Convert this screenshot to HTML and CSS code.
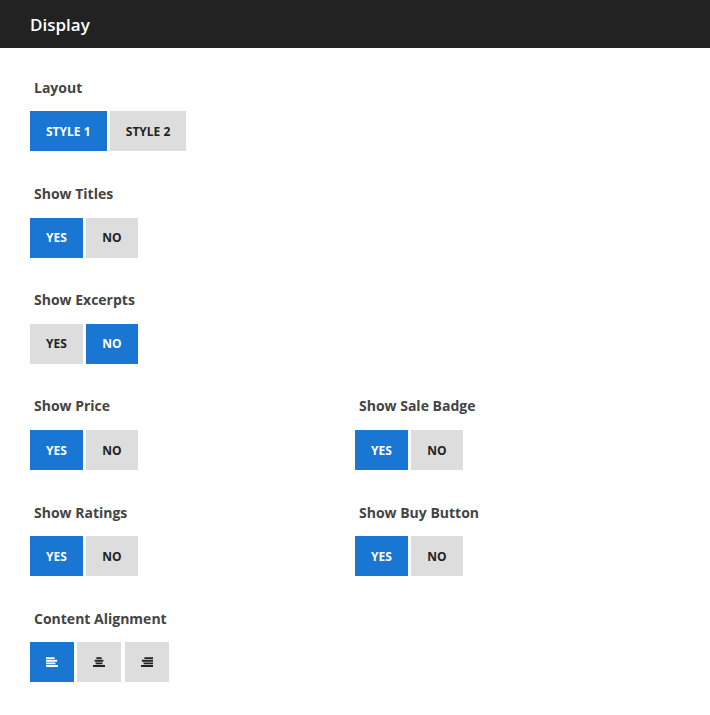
FILE: index.html
```html
<!DOCTYPE html>
<html lang="en">
<head>
<meta charset="utf-8">
<title>Display</title>
<link rel="stylesheet" href="styles.css">
</head>
<body>
<header class="bar">Display</header>
<main class="fields">
  <section class="field wide"><h3>Layout</h3><div class="group"><button class="on style">STYLE 1</button><button class="style">STYLE 2</button></div></section>
  <section class="field wide"><h3>Show Titles</h3><div class="group"><button class="on yes">YES</button><button class="no">NO</button></div></section>
  <section class="field wide"><h3>Show Excerpts</h3><div class="group"><button class="yes">YES</button><button class="on no">NO</button></div></section>
  <section class="field"><h3>Show Price</h3><div class="group"><button class="on yes">YES</button><button class="no">NO</button></div></section>
  <section class="field"><h3>Show Sale Badge</h3><div class="group"><button class="on yes">YES</button><button class="no">NO</button></div></section>
  <section class="field"><h3>Show Ratings</h3><div class="group"><button class="on yes">YES</button><button class="no">NO</button></div></section>
  <section class="field"><h3>Show Buy Button</h3><div class="group"><button class="on yes">YES</button><button class="no">NO</button></div></section>
  <section class="field wide"><h3>Content Alignment</h3><div class="group icons">
    <button class="on icon" aria-label="Left"><svg viewBox="0 0 12 10"><path d="M0 .2h8.6v1.9H0zM0 2.8h11.1v1.9H0zM0 5.4h9.4v1.9H0zM0 8h12v2H0z"/></svg></button>
    <button class="icon" aria-label="Center"><svg viewBox="0 0 12 10"><path d="M3.4 .2h5.2v1.9H3.4zM1.7 2.8h8.6v1.9H1.7zM2.6 5.4h6.8v1.9H2.6zM0 8h12v2H0z"/></svg></button>
    <button class="icon" aria-label="Right"><svg viewBox="0 0 12 10"><path d="M3.4 .2H12v1.9H3.4zM.9 2.8H12v1.9H.9zM2.6 5.4H12v1.9H2.6zM0 8h12v2H0z"/></svg></button>
  </div></section>
</main>
</body>
</html>
```
FILE: styles.css
```css
* { box-sizing: border-box; }
body { margin: 0; background: #fff; font-family: "Open Sans", sans-serif; }
.bar { height: 48px; padding-left: 30px; background: #222; color: #fff; font-size: 17px; font-weight: 600; line-height: 50px; }
.fields { display: grid; grid-template-columns: 325px 325px; padding: 28.8px 30px 0; }
.field { height: 106.2px; }
.wide { grid-column: 1 / -1; }
h3 { margin: 0 0 12.6px 4px; color: #444; font-size: 14px; font-weight: 700; line-height: 22px; }
.group { display: flex; gap: 3px; }
button { height: 40px; margin: 0; padding: 1.6px 0 0; border: 0; background: #ddd; color: #222; font: 700 12px/38.4px "Open Sans", sans-serif; text-align: center; }
.on { background: #1976d2; color: #fff; }
.style { width: 76.5px; }
.style + .style { padding-left: 0.6px; }
.yes { width: 53px; }
.no { width: 52px; }
.icon { display: flex; align-items: center; justify-content: center; width: 44px; padding: 0; }
.icons { gap: 3.4px; }
svg { width: 12px; height: 10px; fill: currentColor; }
```
